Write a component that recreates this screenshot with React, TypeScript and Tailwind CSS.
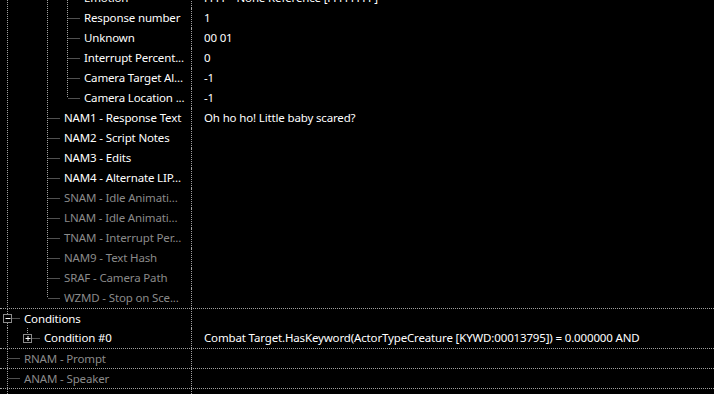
import React from "react";

type Row = {
  label: string;
  value?: string;
  depth: number;
  anc: boolean[];
  last?: boolean;
  box?: "+" | "-";
  dim?: boolean;
  top?: boolean;
};

const rows: Row[] = [
  { label: "Emotion", value: "FFFF - None Reference [FFFFFFFF]", depth: 3, anc: [true, false, true] },
  { label: "Response number", value: "1", depth: 3, anc: [true, false, true] },
  { label: "Unknown", value: "00 01", depth: 3, anc: [true, false, true] },
  { label: "Interrupt Percent...", value: "0", depth: 3, anc: [true, false, true] },
  { label: "Camera Target Al...", value: "-1", depth: 3, anc: [true, false, true] },
  { label: "Camera Location ...", value: "-1", depth: 3, anc: [true, false, true], last: true },
  { label: "NAM1 - Response Text", value: "Oh ho ho! Little baby scared?", depth: 2, anc: [true, false] },
  { label: "NAM2 - Script Notes", depth: 2, anc: [true, false] },
  { label: "NAM3 - Edits", depth: 2, anc: [true, false] },
  { label: "NAM4 - Alternate LIP...", depth: 2, anc: [true, false] },
  { label: "SNAM - Idle Animati...", depth: 2, anc: [true, false], dim: true },
  { label: "LNAM - Idle Animati...", depth: 2, anc: [true, false], dim: true },
  { label: "TNAM - Interrupt Per...", depth: 2, anc: [true, false], dim: true },
  { label: "NAM9 - Text Hash", depth: 2, anc: [true, false], dim: true },
  { label: "SRAF - Camera Path", depth: 2, anc: [true, false], dim: true },
  { label: "WZMD - Stop on Sce...", depth: 2, anc: [true, false], dim: true, last: true },
  { label: "Conditions", depth: 0, anc: [], box: "-", top: true },
  {
    label: "Condition #0",
    value: "Combat Target.HasKeyword(ActorTypeCreature [KYWD:00013795]) = 0.000000 AND",
    depth: 1,
    anc: [true],
    box: "+",
    last: true,
  },
  { label: "RNAM - Prompt", depth: 0, anc: [], dim: true, top: true },
  { label: "ANAM - Speaker", depth: 0, anc: [], dim: true, top: true },
  { label: "TSCE - Start Scene", depth: 0, anc: [], dim: true, top: true },
];

const LINE = "#a0a0a0";

function Guides({ row }: { row: Row }) {
  const h = row.top ? 19 : 20;
  const mid = row.top ? 9 : 10;
  const w = 20 * (row.depth + 1);
  const own = 20 * row.depth + 7.5;
  return (
    <svg width={w} height={h} className="shrink-0">
      {row.anc.map((on, i) =>
        on ? (
          <line key={i} x1={20 * i + 7.5} y1={0} x2={20 * i + 7.5} y2={h} stroke={LINE} strokeDasharray="1 1" />
        ) : null
      )}
      <line x1={own} y1={0} x2={own} y2={row.last ? mid : h} stroke={LINE} strokeDasharray="1 1" />
      <line x1={own + 1} y1={mid + 0.5} x2={own + 12.5} y2={mid + 0.5} stroke={LINE} strokeDasharray="1 1" />
      {row.box && (
        <g>
          <rect x={own - 4} y={mid - 3.5} width={8} height={8} fill="#000" stroke="#8c8c8c" />
          <line x1={own - 2} y1={mid + 0.5} x2={own + 3} y2={mid + 0.5} stroke="#fff" />
          {row.box === "+" && <line x1={own + 0.5} y1={mid - 2} x2={own + 0.5} y2={mid + 3} stroke="#fff" />}
        </g>
      )}
    </svg>
  );
}

export default function App() {
  return (
    <div className="w-[714px] h-[394px] overflow-hidden bg-black text-[11.5px] tracking-[-0.15px] font-['Noto_Sans',sans-serif]">
      <div className="-mt-[12px] flex flex-col">
        {rows.map((row, i) => (
          <div
            key={i}
            className={`flex h-5 ${row.top ? "border-t border-dotted border-[#a0a0a0]" : ""}`}
          >
            <div className="flex w-[191px] shrink-0 items-center overflow-hidden">
              <Guides row={row} />
              <span
                className={`ml-1 whitespace-nowrap leading-5 ${row.dim ? "text-[#8a8a8a]" : "text-white"}`}
              >
                {row.label}
              </span>
            </div>
            <div className="flex flex-1 items-center border-l border-dotted border-[#a0a0a0] pl-3 whitespace-nowrap text-white leading-5">
              {row.value}
            </div>
          </div>
        ))}
      </div>
    </div>
  );
}
